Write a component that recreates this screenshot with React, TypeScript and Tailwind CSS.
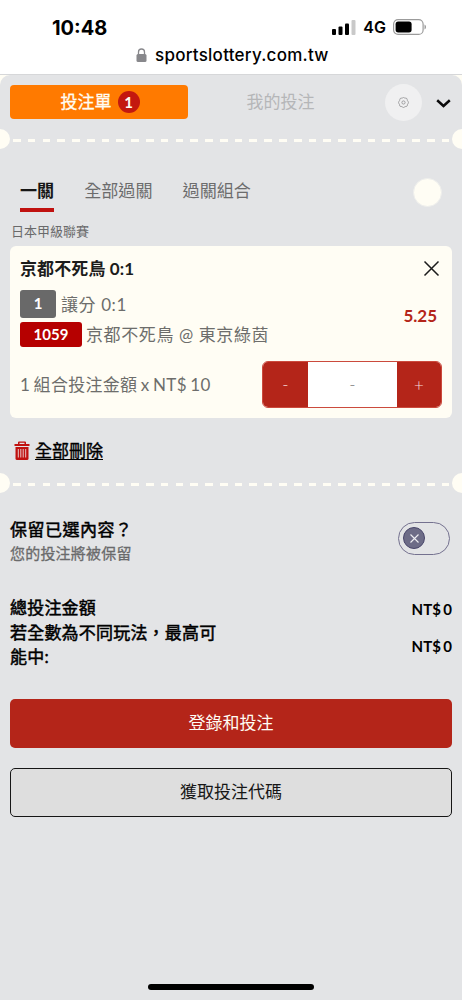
import type { ReactNode } from 'react';
import { clsx } from 'clsx';

const PLAY_TABS = ['一關', '全部過關', '過關組合'];

interface Selection {
  title: string;
  market: string;
  code: string;
  match: string;
  odds: string;
}

const SELECTION: Selection = {
  title: '京都不死鳥 0:1',
  market: '讓分 0:1',
  code: '1059',
  match: '京都不死鳥 @ 東京綠茵',
  odds: '5.25',
};

function StatusBar() {
  return (
    <header className="h-[75px] shrink-0 border-b border-[#d6d7d9] bg-white font-['Inter',sans-serif] text-black">
      <div className="flex h-[42px] items-end justify-between pr-[35px] pl-[52px]">
        <span className="text-[20px] leading-[27px] font-bold">10:48</span>
        <div className="flex h-[30px] items-center">
          <svg width="24" height="15" viewBox="0 0 24 15">
            <rect x="0" y="9" width="4" height="6" rx="1" />
            <rect x="6.5" y="6.5" width="4" height="8.5" rx="1" />
            <rect x="13" y="3.5" width="4" height="11.5" rx="1" />
            <rect x="19.5" y="0" width="4" height="15" rx="1" fill="#c9c9c9" />
          </svg>
          <span className="ml-[7px] text-[16px] font-semibold">4G</span>
          <svg className="ml-[7px]" width="34" height="16" viewBox="0 0 34 16">
            <rect x="0.6" y="0.6" width="29.5" height="14.8" rx="4.5" fill="none" stroke="#9b9b9b" strokeWidth="1.2" />
            <rect x="2.6" y="2.6" width="16" height="10.8" rx="2.6" />
            <path d="M31.5 5.5c2 .8 2 4.200 0 5z" fill="#9b9b9b" />
          </svg>
        </div>
      </div>
      <div className="flex h-[27px] items-center pl-[136px]">
        <svg className="-mt-[1px]" width="11" height="14" viewBox="0 0 11 14">
          <path d="M2.500 7V4a3 3 0 0 1 6 0v3" fill="none" stroke="#88888c" strokeWidth="1.3" />
          <rect x="0.500" y="6" width="10" height="8" rx="1.500" fill="#88888c" />
        </svg>
        <span className="ml-[8px] text-[17px] font-medium tracking-[0.25px]">sportslottery.com.tw</span>
      </div>
    </header>
  );
}

function TicketDivider() {
  return (
    <div className="flex h-5 items-center justify-between overflow-hidden">
      <div className="-ml-[10px] size-5 shrink-0 rounded-full bg-[#fffdf4]" />
      <div className="mt-[2px] h-[3px] w-[437px] bg-[repeating-linear-gradient(90deg,#fffdf4_0_7.7px,transparent_7.7px_14.78px)]" />
      <div className="-mr-[10px] size-5 shrink-0 rounded-full bg-[#fffdf4]" />
    </div>
  );
}

function Badge({ className, children }: { className?: string; children: ReactNode }) {
  return (
    <span
      className={clsx(
        'flex items-center justify-center rounded-[3px] text-[15px] font-bold text-white',
        className,
      )}
    >
      {children}
    </span>
  );
}

function SlipHeader() {
  return (
    <div className="flex h-[34px] items-center px-[10px]">
      <button className="flex h-[34px] w-[178px] items-center justify-center rounded-[4px] bg-[#ff7a00] pl-[2px] text-[17px] text-[#fffdf4]">
        <span className="[-webkit-text-stroke:0.3px]">投注單</span>
        <span className="ml-[6px] flex size-[22px] items-center justify-center rounded-full bg-[#c3180f] text-[15px] font-bold">
          1
        </span>
      </button>
      <button className="w-[185px] text-center text-[17px] text-[#b5b6b8]">我的投注</button>
      <button className="ml-[12px] flex size-[37px] shrink-0 items-center justify-center rounded-full bg-[#f0f0f1]">
        <svg width="11" height="11" viewBox="0 0 11 11" fill="none" stroke="#8d8d8f" strokeWidth="0.8">
          <path d="M4.600 0.900Q5.500 0 6.400 0.900Q7 1.400 7.800 1.100Q9.100 1.200 9.200 2.500Q9.200 3.600 10 4.300Q10.900 5.500 10 6.700Q9.300 7.200 9.500 8.200Q9.200 9.500 7.900 9.500Q7 9.400 6.400 10.100Q5.500 10.900 4.600 10.100Q4 9.400 3 9.500Q1.700 9.500 1.500 8.200Q1.700 7.200 1 6.700Q0.100 5.500 1 4.300Q1.800 3.600 1.800 2.500Q1.900 1.200 3.200 1.100Q4 1.400 4.600 0.900Z" />
          <circle cx="5.500" cy="5.500" r="1.600" />
        </svg>
      </button>
      <svg className="mt-[2px] ml-[14px] shrink-0" width="15" height="9" viewBox="0 0 15 9" fill="none" stroke="#0b0b0b" strokeWidth="2.500">
        <path d="M1.200 1.300L7.500 7L13.800 1.300" />
      </svg>
    </div>
  );
}

function PlayTabs() {
  return (
    <div className="flex h-[37px] items-start pr-[20px] pl-[20px]">
      {PLAY_TABS.map((tab, i) => (
        <button
          key={tab}
          className={clsx(
            'mr-[30px] h-[37px] border-b-4 pt-[4px] pb-[5px] text-[17.100px] leading-[24px]',
            i === 0 ? 'border-[#c0110f] font-bold text-[#161616]' : 'border-transparent text-[#6c6c6d]',
          )}
        >
          {tab}
        </button>
      ))}
      <div className="mt-[3px] ml-auto size-[29px] rounded-full border border-[#eeeeec] bg-[#fffdf4]" />
    </div>
  );
}

function StakeStepper() {
  return (
    <div className="flex h-[47px] w-[180px] overflow-hidden rounded-[6px] border border-[#cb4a3d] bg-white text-[17px] font-light">
      <button className="w-[45px] bg-[#b42519] text-[#f7dcd9]">-</button>
      <span className="flex flex-1 items-center justify-center text-[#777]">-</span>
      <button className="w-[44px] bg-[#b42519] text-[#f7dcd9]">+</button>
    </div>
  );
}

function SelectionCard({ title, market, code, match, odds }: Selection) {
  return (
    <section className="mx-[10px] h-[172px] rounded-[6px] bg-[#fffdf4] pr-[10px] pl-[10px] text-[17px]">
      <div className="flex h-[43px] items-center justify-between pt-[2px] pr-[2px]">
        <h2 className="font-bold tracking-[0.1px] text-[#1c1c1b]">{title}</h2>
        <svg width="17" height="17" viewBox="0 0 17 17" fill="none" stroke="#1b1b1b" strokeWidth="1.500">
          <path d="M1.500 1.500L15.500 15.500M15.500 1.500L1.500 15.500" />
        </svg>
      </div>
      <div className="flex items-center justify-between pr-[5px] text-[#6d6d6b]">
        <div>
          <div className="flex h-[29px] items-center gap-[5px]">
            <Badge className="h-[28px] w-[36px] bg-[#696969]">1</Badge>
            <span className="mt-[2px] tracking-[0.6px]">{market}</span>
          </div>
          <div className="mt-[4px] flex h-[25px] items-center gap-[4px]">
            <Badge className="h-[25px] w-[62px] bg-[#b60000]">{code}</Badge>
            <span className="tracking-[0.6px]">{match}</span>
          </div>
        </div>
        <span className="mb-[4px] font-bold text-[#b42519]">{odds}</span>
      </div>
      <div className="mt-[14px] flex items-center justify-between">
        <span className="tracking-[0.3px] text-[#6d6d6b] [word-spacing:-1.2px]">1 組合投注金額 x NT$ 10</span>
        <StakeStepper />
      </div>
    </section>
  );
}

function DeleteAll() {
  return (
    <button className="flex h-[25px] items-center pl-[14px] text-[17px] leading-[25px] text-black">
      <svg width="16" height="19" viewBox="0 0 16 19" fill="#c0110f">
        <path d="M5 0.500h6a1 1 0 0 1 1 1V3h3.500v2H0.500V3H4V1.500a1 1 0 0 1 1-1zM5.500 1.800V3h5V1.800z" fillRule="evenodd" />
        <path d="M1.500 6h13v11.500a1.500 1.500 0 0 1-1.500 1.500H3a1.500 1.500 0 0 1-1.500-1.500z" />
        <path d="M4.300 8v8.500M6.800 8v8.500M9.200 8v8.500M11.700 8v8.500" stroke="#e7c8c9" strokeWidth="1" />
      </svg>
      <span className="ml-[5px] underline underline-offset-[2px] [-webkit-text-stroke:0.4px]">全部刪除</span>
    </button>
  );
}

function KeepSelections() {
  return (
    <div className="flex items-center justify-between pr-[12px] pl-[10px]">
      <div>
        <div className="text-[17px] leading-[24px] tracking-[0.5px] text-black [-webkit-text-stroke:0.5px]">
          保留已選內容？
        </div>
        <div className="text-[15px] leading-[22px] tracking-[0.2px] text-[#6a6a6b] [-webkit-text-stroke:0.3px]">
          您的投注將被保留
        </div>
      </div>
      <button className="mb-[6px] flex h-[33px] w-[52px] items-center rounded-full border border-[#74718f] pl-[4px]">
        <span className="flex size-[22px] items-center justify-center rounded-full border border-[#48456a] bg-[#6d6c87]">
          <svg width="9" height="9" viewBox="0 0 9 9" stroke="#eeeef3" strokeWidth="1.100">
            <path d="M0.500 0.500L8.500 8.500M8.500 0.500L0.500 8.500" />
          </svg>
        </span>
      </button>
    </div>
  );
}

function Totals() {
  return (
    <dl className="px-[10px] text-[17px] leading-[24.500px] tracking-[0.2px] text-black">
      <div className="flex items-center justify-between">
        <dt className="[-webkit-text-stroke:0.5px]">總投注金額</dt>
        <dd className="mt-[2px] text-[15px] font-bold tracking-normal [word-spacing:-1.2px]">NT$ 0</dd>
      </div>
      <div className="flex items-center justify-between">
        <dt className="-mt-[1px] w-[210px] [-webkit-text-stroke:0.5px]">若全數為不同玩法，最高可能中:</dt>
        <dd className="mt-[2px] text-[15px] font-bold tracking-normal [word-spacing:-1.2px]">NT$ 0</dd>
      </div>
    </dl>
  );
}

export default function App() {
  return (
    <div className="flex h-[1000px] w-[462px] flex-col overflow-hidden bg-[#fffdf4] font-['Lato','Noto_Sans_CJK_TC',sans-serif]">
      <StatusBar />
      <main lang="zh-Hant" className="flex flex-1 flex-col rounded-t-[10px] bg-[#e3e4e6] pt-[10px]">
        <SlipHeader />
        <div className="mt-[10px]">
          <TicketDivider />
        </div>
        <div className="mt-[26px]">
          <PlayTabs />
        </div>
        <p className="mt-[9px] h-[20px] pl-[11px] text-[13px] leading-[20px] text-[#6a6a6b]">日本甲級聯賽</p>
        <div className="mt-[5px]">
          <SelectionCard {...SELECTION} />
        </div>
        <div className="mt-[20px]">
          <DeleteAll />
        </div>
        <div className="mt-[10px]">
          <TicketDivider />
        </div>
        <div className="mt-[25px]">
          <KeepSelections />
        </div>
        <div className="mt-[31px]">
          <Totals />
        </div>
        <div className="mt-[29px] flex flex-col gap-[20px] px-[10px] text-[17px]">
          <button className="h-[49px] rounded-[5px] bg-[#b42519] text-[#fffdf4]">登錄和投注</button>
          <button className="h-[49px] rounded-[5px] border border-[#161616] bg-[#dedede] text-[#161616]">
            獲取投注代碼
          </button>
        </div>
        <div className="mx-auto mt-auto mb-[10px] h-[6px] w-[166px] rounded-full bg-black" />
      </main>
    </div>
  );
}
